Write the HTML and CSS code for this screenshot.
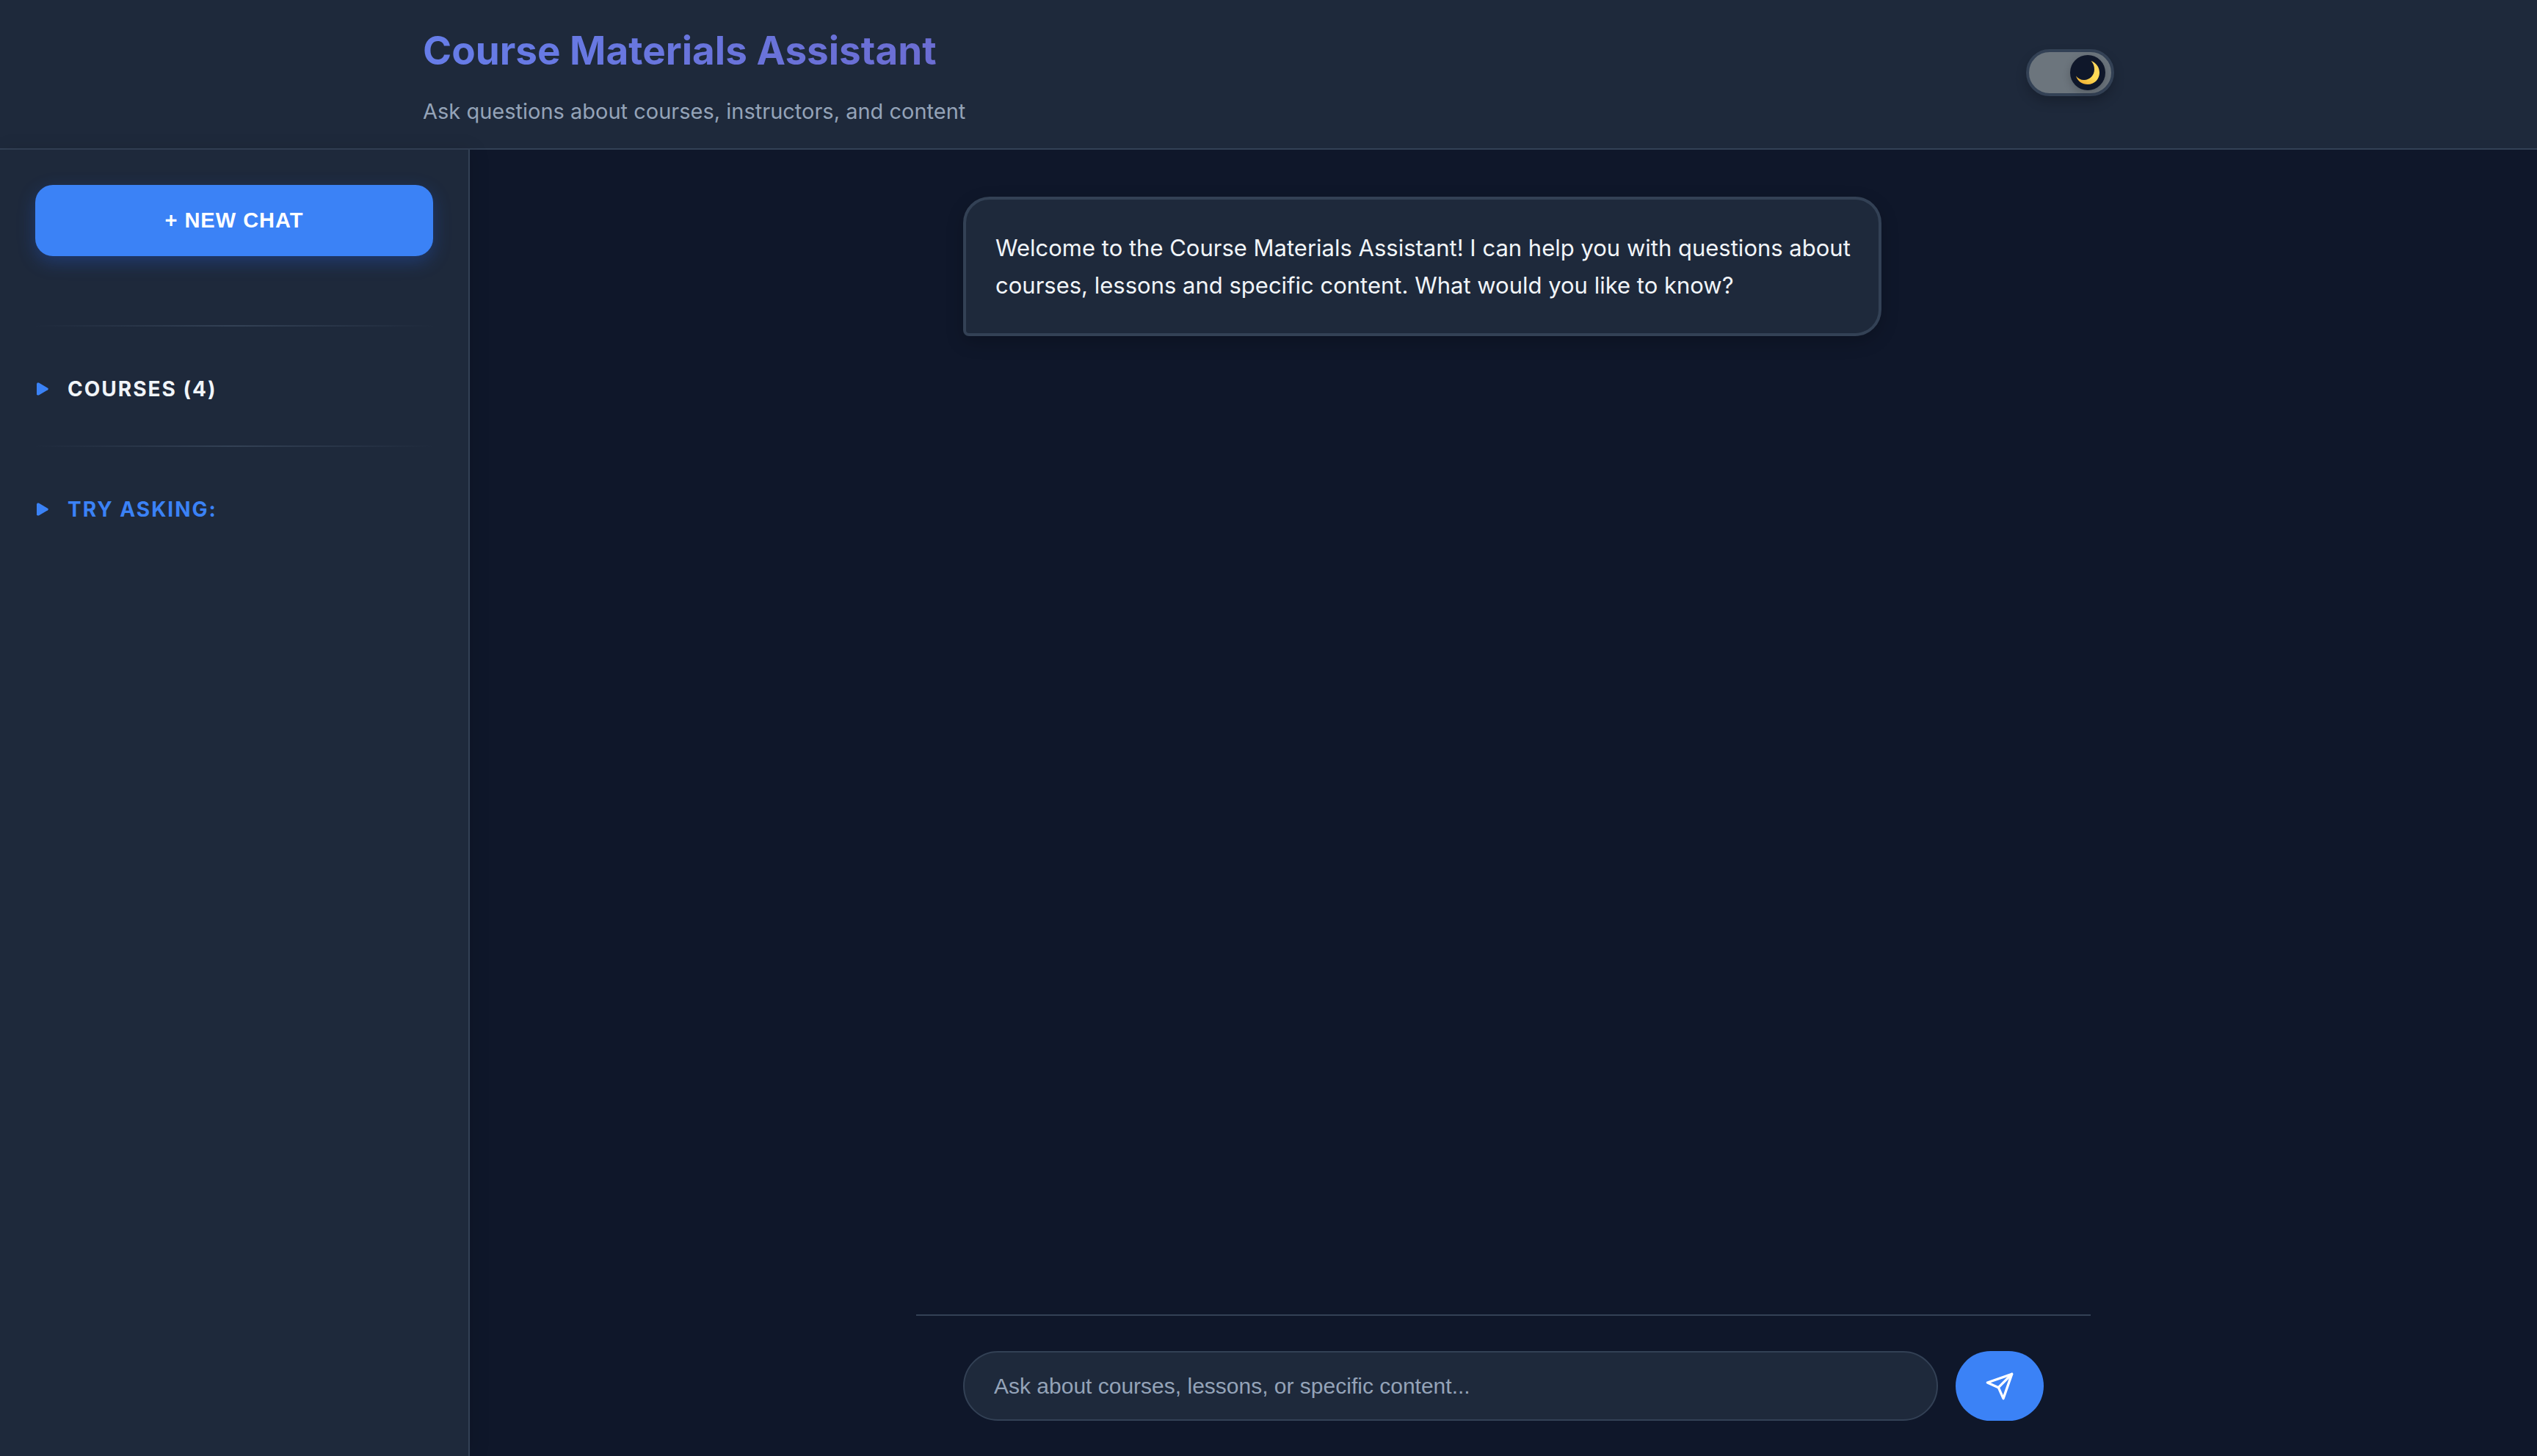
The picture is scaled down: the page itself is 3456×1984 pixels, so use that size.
FILE: index.html
```html
<!DOCTYPE html>
<html lang="en">
<head>
  <meta charset="utf-8">
  <meta name="viewport" content="width=device-width, initial-scale=1">
  <title>Course Materials Assistant</title>
  <link rel="stylesheet" href="styles.css">
</head>
<body>
  <header class="header">
    <div class="header-inner">
      <div class="header-text">
        <h1 class="title">Course Materials Assistant</h1>
        <p class="subtitle">Ask questions about courses, instructors, and content</p>
      </div>
      <button class="theme-toggle" type="button" aria-label="Toggle theme">
        <span class="theme-thumb">
          <svg class="moon" viewBox="0 0 32 32" aria-hidden="true">
            <defs>
              <linearGradient id="moon-fill" x1="0.9" y1="0.2" x2="0.5" y2="1">
                <stop offset="0" stop-color="#fbd55a"/>
                <stop offset="0.6" stop-color="#fddc55"/>
                <stop offset="1" stop-color="#f5b93a"/>
              </linearGradient>
            </defs>
            <path fill="url(#moon-fill)" d="M20.5 0C27.5 2.500 32 8.500 32 16C32 25 25 32 16 32C8.500 32 2 27.500 0 20.500C2.500 24 6.500 26 11 26C19 26 25 19.500 25 11.500C25 7 23.500 3 20.500 0Z"/>
          </svg>
        </span>
      </button>
    </div>
  </header>

  <div class="layout">
    <aside class="sidebar">
      <button class="new-chat" type="button">+ NEW CHAT</button>
      <details class="section">
        <summary class="section-title">Courses (4)</summary>
      </details>
      <details class="section">
        <summary class="section-title section-title-accent">Try asking:</summary>
      </details>
    </aside>

    <main class="chat">
      <div class="messages">
        <div class="message">
          <p class="message-text">Welcome to the Course Materials Assistant! I can help you with questions about courses, lessons and specific content. What would you like to know?</p>
        </div>
      </div>
      <form class="composer">
        <input class="composer-input" type="text" aria-label="Your question" placeholder="Ask about courses, lessons, or specific content...">
        <button class="send" type="button" aria-label="Send">
          <svg class="send-icon" viewBox="0 0 24 24" fill="none" stroke="currentColor" stroke-width="2" stroke-linecap="round" stroke-linejoin="round" aria-hidden="true">
            <path d="M22 2L11 13"/>
            <path d="M22 2l-7 20-4-9-9-4 20-7z"/>
          </svg>
        </button>
      </form>
    </main>
  </div>
</body>
</html>
```

FILE: styles.css
```css
:root {
  --background: #0f172a;
  --surface: #1e293b;
  --border: #334155;
  --primary: #3b82f6;
  --text: #f1f5f9;
  --muted: #94a3b8;
}

* {
  box-sizing: border-box;
  margin: 0;
  padding: 0;
}

body {
  display: flex;
  flex-direction: column;
  min-height: 100vh;
  background: var(--background);
  color: var(--text);
  font-family: Inter, "Liberation Sans", sans-serif;
  font-size: 30px;
}

.header {
  padding: 24px 0 28px;
  background: var(--surface);
  border-bottom: 2px solid var(--border);
}

.header-inner {
  display: flex;
  align-items: center;
  justify-content: space-between;
  max-width: 2400px;
  margin: 0 auto;
  padding: 0 48px;
}

.header-text {
  display: flex;
  flex: 1;
  flex-direction: column;
  gap: 16px;
}

.title {
  background: linear-gradient(135deg, #667eea 0%, #764ba2 100%);
  background-clip: text;
  -webkit-background-clip: text;
  color: transparent;
  font-size: 53px;
  font-weight: 700;
  line-height: 90px;
}

.subtitle {
  color: var(--muted);
  font-size: 29px;
  line-height: 44px;
}

.theme-toggle {
  display: flex;
  justify-content: flex-end;
  width: 120px;
  height: 64px;
  padding: 4px 8px;
  background: #6c757d;
  border: 4px solid var(--border);
  border-radius: 32px;
  box-shadow: 0 8px 16px rgba(0, 0, 0, 0.2);
}

.theme-thumb {
  display: grid;
  place-items: center;
  width: 48px;
  height: 48px;
  background: var(--background);
  border-radius: 50%;
  box-shadow: 0 4px 12px rgba(0, 0, 0, 0.2);
}

.moon {
  width: 32px;
  height: 32px;
}

.layout {
  display: flex;
  flex: 1;
}

.sidebar {
  flex: 0 0 640px;
  padding: 48px;
  background: var(--surface);
  border-right: 2px solid var(--border);
  box-shadow: 4px 0 24px rgba(0, 0, 0, 0.1);
}

.new-chat {
  width: 100%;
  height: 97px;
  margin-bottom: 94px;
  background: var(--primary);
  border: none;
  border-radius: 24px;
  box-shadow: 0 8px 24px rgba(37, 99, 235, 0.3);
  color: #fff;
  font-family: "Liberation Sans", Arial, sans-serif;
  font-size: 29px;
  font-weight: 700;
  letter-spacing: 1px;
}

.section {
  padding: 62px 0 54px;
  border-top: 2px solid;
  border-image: linear-gradient(90deg, transparent, var(--border), transparent) 1;
}

.section-title {
  display: flex;
  align-items: center;
  gap: 26px;
  padding-left: 2px;
  font-size: 28px;
  font-weight: 700;
  letter-spacing: 2px;
  line-height: 46px;
  list-style: none;
  text-transform: uppercase;
}

.section-title::before {
  width: 16px;
  height: 18px;
  background: var(--primary);
  clip-path: polygon(0 10%, 6% 3%, 18% 3%, 94% 43%, 100% 50%, 94% 57%, 18% 97%, 6% 97%, 0 90%);
  content: "";
}

.section-title-accent {
  color: var(--primary);
}

.chat {
  display: flex;
  flex: 1;
  flex-direction: column;
  max-width: 1600px;
  margin: 0 auto;
}

.messages {
  flex: 1;
  padding: 64px;
}

.message {
  width: 85%;
  padding: 40px 32px 40px 40px;
  background: var(--surface);
  border: 4px solid var(--border);
  border-radius: 36px 36px 36px 8px;
  box-shadow: 0 8px 24px rgba(0, 0, 0, 0.2);
}

.message-text {
  font-size: 31px;
  line-height: 51px;
}

.composer {
  display: flex;
  gap: 24px;
  padding: 48px 64px;
  border-top: 2px solid var(--border);
}

.composer-input {
  flex: 1;
  min-width: 0;
  height: 95px;
  padding: 0 40px;
  background: var(--surface);
  border: 2px solid var(--border);
  border-radius: 48px;
  color: var(--text);
  font-family: "Liberation Sans", Arial, sans-serif;
  font-size: 30px;
}

.composer-input::placeholder {
  color: var(--muted);
}

.send {
  display: grid;
  place-items: center;
  width: 120px;
  height: 95px;
  background: var(--primary);
  border: none;
  border-radius: 48px;
  color: #fff;
}

.send-icon {
  width: 40px;
  height: 40px;
}
```
